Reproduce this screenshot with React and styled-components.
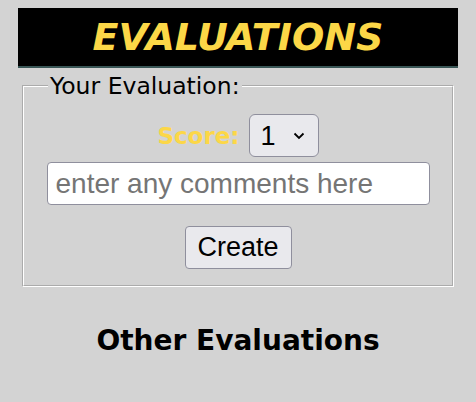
import React from "react";
import styled, { createGlobalStyle } from "styled-components";

const GlobalStyle = createGlobalStyle`
  html, body {
    background-color: lightgray;
  }
  body {
    margin: 8px;
    font-family: "DejaVu Sans", Verdana, sans-serif;
  }
`;

const Page = styled.div`
  margin: 0 10px;
  display: flex;
  flex-direction: column;
`;

const Banner = styled.h1`
  margin: 0;
  height: 58px;
  display: flex;
  align-items: center;
  justify-content: center;
  background-color: black;
  border-bottom: 2px solid #395656;
  color: #fcd747;
  font-family: "DejaVu Sans", Verdana, sans-serif;
  font-size: 38px;
  font-style: italic;
  font-weight: bold;
`;

const EvalForm = styled.fieldset`
  margin: 4px 4px 0;
  padding: 14px 12px 16px;
  border: 2px groove white;
  display: flex;
  flex-direction: column;
  align-items: center;
`;

const Legend = styled.legend`
  margin-left: 12px;
  padding: 0 2px;
  font-size: 23.5px;
  color: black;
`;

const ScoreRow = styled.div`
  display: flex;
  align-items: center;
  gap: 9px;
`;

const ScoreLabel = styled.label`
  color: #fcd747;
  font-weight: bold;
  font-size: 23px;
`;

const control = `
  font-family: "Liberation Sans", Arial, sans-serif;
  font-size: 27px;
  border: 1px solid #8f8f9d;
  box-sizing: border-box;
  height: 43px;
`;

const Select = styled.select`
  ${control}
  appearance: none;
  width: 70px;
  padding: 0 0 0 11px;
  border-radius: 6px;
  color: black;
  background: #e9e9ed
    url("data:image/svg+xml;utf8,<svg xmlns='http://www.w3.org/2000/svg' width='12' height='8' viewBox='0 0 12 8'><path d='M1.5 1.5l4.5 4.5 4.5-4.5' fill='none' stroke='black' stroke-width='1.8'/></svg>")
    no-repeat right 13px center;
`;

const CommentInput = styled.input`
  ${control}
  font-size: 28px;
  margin-top: 5px;
  width: 383px;
  height: 43px;
  padding: 0 8px;
  border-radius: 4px;
  background: white;
  &::placeholder {
    color: #757575;
  }
`;

const Button = styled.button`
  ${control}
  margin-top: 21px;
  width: 107px;
  padding: 0;
  border-radius: 4px;
  background: #e9e9ed;
  color: black;
`;

const SubTitle = styled.h2`
  margin: 37px 0 0;
  text-align: center;
  font-size: 28px;
  font-weight: bold;
`;

export default function App() {
  return (
    <>
      <GlobalStyle />
      <Page>
        <Banner>EVALUATIONS</Banner>
        <EvalForm>
          <Legend>Your Evaluation:</Legend>
          <ScoreRow>
            <ScoreLabel htmlFor="score">Score:</ScoreLabel>
            <Select id="score" defaultValue="1">
              <option value="1">1</option>
              <option value="2">2</option>
              <option value="3">3</option>
              <option value="4">4</option>
              <option value="5">5</option>
            </Select>
          </ScoreRow>
          <CommentInput placeholder="enter any comments here" />
          <Button>Create</Button>
        </EvalForm>
        <SubTitle>Other Evaluations</SubTitle>
      </Page>
    </>
  );
}
